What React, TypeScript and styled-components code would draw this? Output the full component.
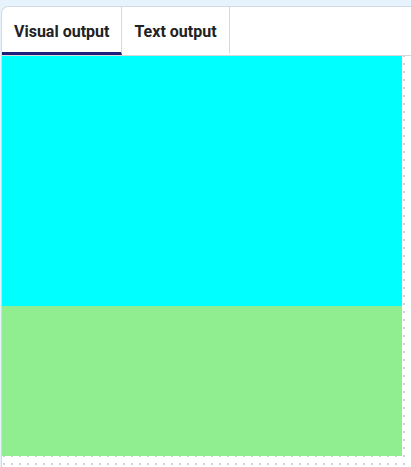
import React, { useState } from "react";
import styled, { createGlobalStyle } from "styled-components";

const Global = createGlobalStyle`
  html, body { margin: 0; padding: 0; background: #e6f2fc; }
  body { font-family: Roboto, "Liberation Sans", sans-serif; overflow: hidden; }
`;

const Page = styled.div`
  padding: 6px 0 0 1px;
  height: 467px;
  box-sizing: border-box;
  display: flex;
  flex-direction: column;
`;

const Card = styled.div`
  flex: 1;
  background: #ffffff;
  border: 1px solid #d2d9e5;
  border-right: none;
  border-bottom: none;
  border-radius: 7px 0 0 0;
  display: flex;
  flex-direction: column;
  overflow: hidden;
`;

const TabBar = styled.div`
  display: flex;
  height: 48px;
  border-bottom: 1px solid #d8d8d8;
  flex-shrink: 0;
`;

const Tab = styled.button<{ $active: boolean }>`
  all: unset;
  box-sizing: border-box;
  height: 48px;
  padding: 3px 12px 0;
  display: flex;
  align-items: center;
  font-family: Roboto, "Liberation Sans", sans-serif;
  font-weight: 700;
  font-size: 16px;
  color: #222;
  border-right: 1px solid #d8d8d8;
  border-bottom: 3px solid ${(p) => (p.$active ? "#1e1e78" : "transparent")};
  cursor: pointer;
`;

const Output = styled.div`
  flex: 1;
  background-color: #ffffff;
  background-image: radial-gradient(circle, #d4d4d4 1px, transparent 1.3px);
  background-size: 8px 8px;
  background-position: -2px -4px;
`;

const Frame = styled.div`
  width: 400px;
  display: flex;
  flex-direction: column;
`;

const Block = styled.div<{ $color: string; $h: number }>`
  background: ${(p) => p.$color};
  height: ${(p) => p.$h}px;
`;

export default function App() {
  const [tab, setTab] = useState(0);
  return (
    <Page>
      <Global />
      <Card>
        <TabBar>
          <Tab $active={tab === 0} onClick={() => setTab(0)}>Visual output</Tab>
          <Tab $active={tab === 1} onClick={() => setTab(1)}>Text output</Tab>
        </TabBar>
        <Output>
          <Frame>
            <Block $color="#00ffff" $h={250} />
            <Block $color="#90ee90" $h={150} />
          </Frame>
        </Output>
      </Card>
    </Page>
  );
}
